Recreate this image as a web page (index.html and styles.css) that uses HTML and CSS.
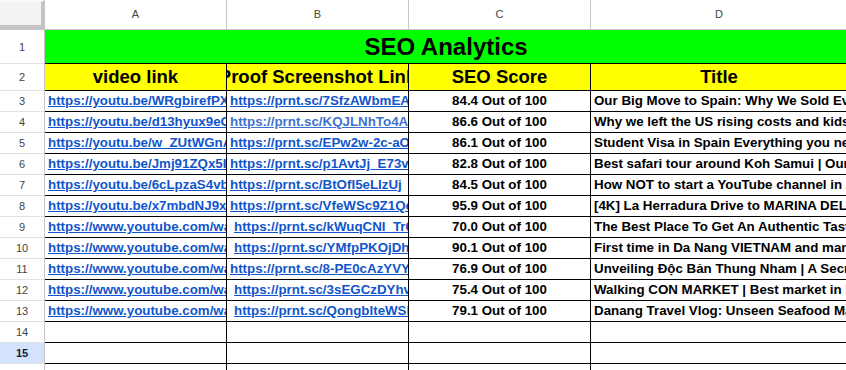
FILE: index.html
```html
<!DOCTYPE html>
<html>
<head>
<meta charset="utf-8">
<link rel="stylesheet" href="styles.css">
</head>
<body>
<div class="sheet">
  <div class="corner"></div>
  <div class="colh">A</div>
  <div class="colh">B</div>
  <div class="colh">C</div>
  <div class="colh colh-last">D</div>

  <div class="rowh">1</div>
  <div class="title"><span>SEO Analytics</span></div>

  <div class="rowh">2</div>
  <div class="hd"><span>video link</span></div>
  <div class="hd"><span>Proof Screenshot Link</span></div>
  <div class="hd"><span>SEO Score</span></div>
  <div class="hd hd-last"><span>Title</span></div>

  <div class="rowh">3</div>
  <div class="c"><a class="lnk">https://youtu.be/WRgbirefPXs</a></div>
  <div class="c"><a class="lnk">https://prnt.sc/7SfzAWbmEAqk</a></div>
  <div class="c num">84.4 Out of 100</div>
  <div class="c txt">Our Big Move to Spain: Why We Sold Everything and Moved</div>

  <div class="rowh">4</div>
  <div class="c"><a class="lnk">https://youtu.be/d13hyux9eOk</a></div>
  <div class="c"><a class="lnk visited">https://prnt.sc/KQJLNhTo4A2p</a></div>
  <div class="c num">86.6 Out of 100</div>
  <div class="c txt">Why we left the US rising costs and kids future</div>

  <div class="rowh">5</div>
  <div class="c"><a class="lnk">https://youtu.be/w_ZUtWGnA4k</a></div>
  <div class="c"><a class="lnk">https://prnt.sc/EPw2w-2c-aOm</a></div>
  <div class="c num">86.1 Out of 100</div>
  <div class="c txt">Student Visa in Spain Everything you need to know</div>

  <div class="rowh">6</div>
  <div class="c"><a class="lnk">https://youtu.be/Jmj91ZQx5Ik</a></div>
  <div class="c"><a class="lnk">https://prnt.sc/p1AvtJj_E73v</a></div>
  <div class="c num">82.8 Out of 100</div>
  <div class="c txt">Best safari tour around Koh Samui | Our family trip</div>

  <div class="rowh">7</div>
  <div class="c"><a class="lnk">https://youtu.be/6cLpzaS4vbQ</a></div>
  <div class="c"><a class="lnk">https://prnt.sc/BtOfI5eLIzUj</a></div>
  <div class="c num">84.5 Out of 100</div>
  <div class="c txt">How NOT to start a YouTube channel in 2024</div>

  <div class="rowh">8</div>
  <div class="c"><a class="lnk">https://youtu.be/x7mbdNJ9xkE</a></div>
  <div class="c"><a class="lnk">https://prnt.sc/VfeWSc9Z1Qe4</a></div>
  <div class="c num">95.9 Out of 100</div>
  <div class="c txt">[4K] La Herradura Drive to MARINA DEL ESTE Spain</div>

  <div class="rowh">9</div>
  <div class="c"><a class="lnk">https://www.youtube.com/watch?v=kd8sW2</a></div>
  <div class="c sp"><a class="lnk">https://prnt.sc/kWuqCNI_Tr6x</a></div>
  <div class="c num">70.0 Out of 100</div>
  <div class="c txt">The Best Place To Get An Authentic Taste of Vietnam</div>

  <div class="rowh">10</div>
  <div class="c"><a class="lnk">https://www.youtube.com/watch?v=Hq2pL9</a></div>
  <div class="c sp"><a class="lnk">https://prnt.sc/YMfpPKOjDhw1</a></div>
  <div class="c num">90.1 Out of 100</div>
  <div class="c txt">First time in Da Nang VIETNAM and many surprises</div>

  <div class="rowh">11</div>
  <div class="c"><a class="lnk">https://www.youtube.com/watch?v=Zt7mN4</a></div>
  <div class="c"><a class="lnk">https://prnt.sc/8-PE0cAzYVYq</a></div>
  <div class="c num">76.9 Out of 100</div>
  <div class="c txt">Unveiling Độc Bản Thung Nham | A Secret Paradise</div>

  <div class="rowh">12</div>
  <div class="c"><a class="lnk">https://www.youtube.com/watch?v=Qa3vB8</a></div>
  <div class="c sp"><a class="lnk">https://prnt.sc/3sEGCzDYhvT0</a></div>
  <div class="c num">75.4 Out of 100</div>
  <div class="c txt">Walking CON MARKET | Best market in Da Nang</div>

  <div class="rowh">13</div>
  <div class="c"><a class="lnk">https://www.youtube.com/watch?v=Rf5xC1</a></div>
  <div class="c sp"><a class="lnk">https://prnt.sc/QongbIteWSlr</a></div>
  <div class="c num">79.1 Out of 100</div>
  <div class="c txt">Danang Travel Vlog: Unseen Seafood Market Tour</div>

  <div class="rowh">14</div>
  <div class="c"></div><div class="c"></div><div class="c"></div><div class="c"></div>

  <div class="rowh rowh-sel">15</div>
  <div class="c"></div><div class="c"></div><div class="c"></div><div class="c"></div>

  <div class="rowh">16</div>
  <div class="c"></div><div class="c"></div><div class="c"></div><div class="c"></div>
</div>
</body>
</html>
```

FILE: styles.css
```css
html, body {
  margin: 0;
  padding: 0;
  background: #fff;
  overflow: hidden;
  width: 846px;
  height: 370px;
}

.sheet {
  display: grid;
  grid-template-columns: 45px 182px 182px 182px 256px;
  grid-template-rows: 30px 34px 27px repeat(14, 21px);
  font-family: "Liberation Sans", Arial, sans-serif;
  width: 847px;
}

.sheet > div {
  box-sizing: border-box;
  overflow: hidden;
  white-space: nowrap;
}

.corner {
  background: #f3f3f3;
  border-right: 4px solid #c4c4c4;
  border-bottom: 5px solid #c4c4c4;
  border-top: 2px solid #fafafa;
}

.colh {
  background: #fff;
  border-right: 1px solid #c7c7c7;
  border-bottom: 1px solid #c4c4c4;
  color: #444;
  font-size: 11px;
  line-height: 29px;
  text-align: center;
}

.colh-last {
  border-right: none;
}

.rowh {
  background: #fff;
  border-right: 1px solid #c4c4c4;
  border-bottom: 1px solid #e1e1e1;
  color: #444;
  font-size: 11px;
  text-align: center;
  display: flex;
  align-items: center;
  justify-content: center;
}

.rowh-sel {
  background: #d3e3fd;
  color: #0b1d3f;
  font-weight: bold;
}

.title {
  grid-column: 2 / 6;
  background: #00ff00;
  border-bottom: 1px solid #000;
  display: flex;
  justify-content: center;
  font-size: 24px;
  font-weight: bold;
  line-height: 33px;
  color: #000;
}

.hd {
  background: #ffff00;
  border-right: 1px solid #000;
  border-bottom: 1px solid #000;
  display: flex;
  justify-content: center;
  font-size: 18.5px;
  font-weight: bold;
  line-height: 26px;
  color: #000;
}

.hd span, .title span {
  flex: none;
  white-space: nowrap;
}

.hd-last {
  border-right: none;
}

.c {
  border-right: 1px solid #000;
  border-bottom: 1px solid #000;
  font-size: 13.33px;
  font-weight: bold;
  line-height: 20px;
  padding: 0 0 0 3px;
  color: #000;
}

.c.sp {
  padding-left: 7px;
}

.lnk {
  color: #1155cc;
  text-decoration: underline;
}

.lnk.visited {
  color: #3d72d0;
}

.num {
  text-align: center;
  padding: 0;
}

.txt {
  padding-left: 3px;
}
```
